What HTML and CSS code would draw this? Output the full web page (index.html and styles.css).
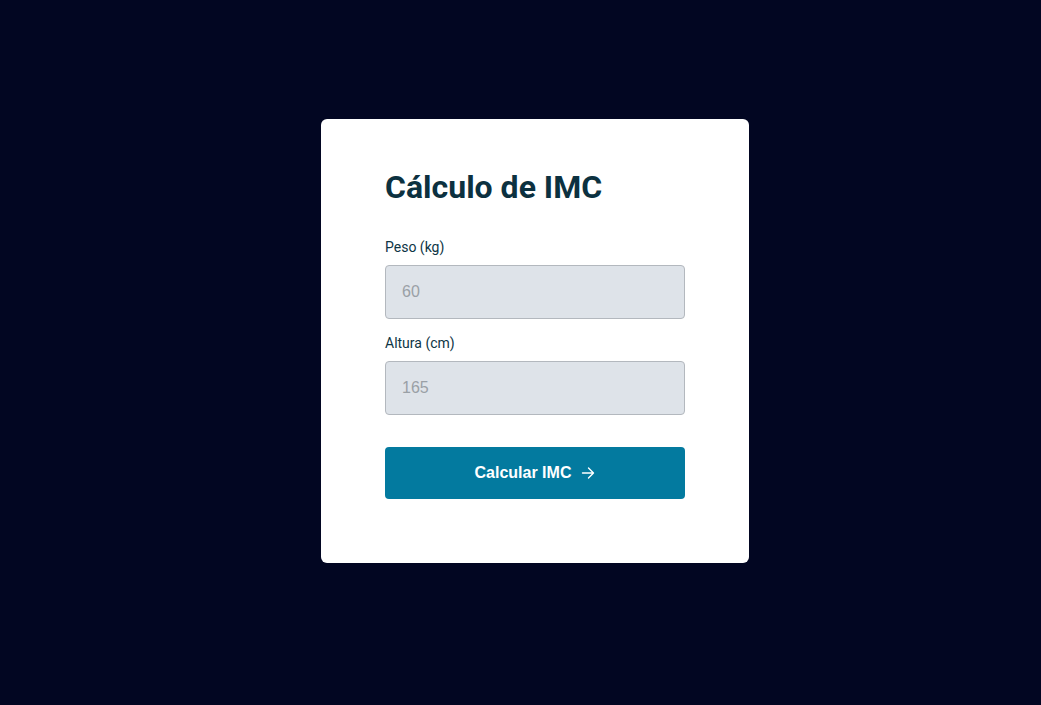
FILE: index.html
```html
<!DOCTYPE html>
<html lang="pt">
<head>
<meta charset="utf-8">
<title>Cálculo de IMC</title>
<link rel="stylesheet" href="styles.css">
</head>
<body>
<main class="page">
  <form class="card">
    <h1 class="title">Cálculo de IMC</h1>
    <label class="label" for="peso">Peso (kg)</label>
    <input class="input" id="peso" type="text" placeholder="60">
    <label class="label" for="altura">Altura (cm)</label>
    <input class="input" id="altura" type="text" placeholder="165">
    <button class="button" type="button">
      <span>Calcular IMC</span>
      <svg class="arrow" width="14" height="14" viewBox="0 0 14 14" fill="none" stroke="currentColor" stroke-width="1.4" stroke-linecap="round" stroke-linejoin="round"><path d="M1.5 7h11M7.5 2l5 5-5 5"/></svg>
    </button>
  </form>
</main>
</body>
</html>
```
FILE: styles.css
```css
* { box-sizing: border-box; }
html, body { margin: 0; height: 100%; }
body {
  background: #020622;
  font-family: Roboto, "Liberation Sans", sans-serif;
}
.page {
  display: flex;
  padding: 119px 0 0 321px;
}
.card {
  width: 428px;
  height: 444px;
  background: #ffffff;
  border-radius: 6px;
  padding: 49px 64px 64px;
  display: flex;
  flex-direction: column;
}
.title {
  margin: 0 0 31px;
  font-size: 32px;
  line-height: 38px;
  font-weight: 700;
  color: #0c3140;
}
.label {
  font-size: 14px;
  line-height: 20px;
  color: #0e3545;
  margin-bottom: 8px;
}
.input {
  width: 300px;
  height: 54px;
  border: 1px solid #b3b8be;
  border-radius: 4px;
  background: #dee3e9;
  padding: 0 16px;
  font-family: "Liberation Sans", Arial, sans-serif;
  font-size: 16px;
  color: #333;
  margin-bottom: 14px;
  outline: none;
}
.input::placeholder { color: #9aa0a6; }
.input:last-of-type { margin-bottom: 0; }
.button {
  margin-top: 32px;
  width: 300px;
  height: 52px;
  border: none;
  border-radius: 4px;
  background: #037a9f;
  color: #ffffff;
  font-family: "Liberation Sans", Arial, sans-serif;
  font-size: 16px;
  font-weight: 700;
  display: flex;
  align-items: center;
  justify-content: center;
  gap: 10px;
  cursor: pointer;
}
.arrow { display: block; }
```
